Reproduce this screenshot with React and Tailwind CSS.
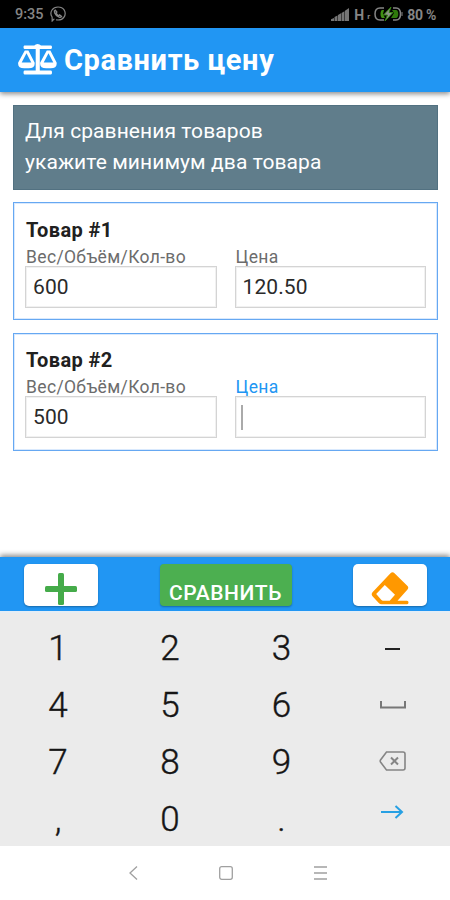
function ScaleIcon() {
  return (
    <svg className="mt-[-2px]" width="39" height="31" viewBox="0 0 39 31" fill="white" fillRule="evenodd">
      <path d="M6.500 1.500h9.800Q17.500 0 19.600 0T23 1.500h10q1 0 1 1.700T33 5H21.800v21.500H33q1 0 1 2T33 30.500H6.500q-1 0-1-2t1-2h11.200V5H6.500q-1 0-1-1.800t1-1.700z" />
      <path d="M6.800 6.500h3.600L16.600 18.500q.8 5.700-6 5.700H6.200Q-.6 24.200.2 18.500zM8.500 9.200 3.700 18.500h9.600z" />
      <path d="M28.800 6.500h3.600L38.600 18.500q.8 5.700-6 5.700H28.200Q21.400 24.200 22.200 18.500zM30.500 9.200 25.700 18.500h9.600z" />
    </svg>
  );
}

function EraserIcon() {
  return (
    <svg width="38" height="33" viewBox="0 0 38 33" fill="#ff9800" fillRule="evenodd">
      <path d="M19.500 1.200Q21.500-.6 23.500 1.200L36.500 14q1.500 1.700 0 3.400L26.500 28.700H36q1.500 0 1.500 1.800T36 32.200H10.500Q9 32.200 7.500 30.700L1.300 24Q0 22.200 1.500 20.200zM13.800 13 5.200 22l5 5.700Q11 28.700 12 28.700h6.700l5.300-5.900z" />
    </svg>
  );
}

function StatusBar() {
  return (
    <div className="flex h-7 shrink-0 items-center justify-between bg-black pl-[15px] pr-[14px] text-[#858585]">
      <div className="flex items-center gap-[6px]">
        <span className="pt-px text-[14.5px] font-medium leading-7">9:35</span>
        <svg width="16" height="16" viewBox="0 0 16 16" fill="none" stroke="#858585" strokeWidth="1.2" strokeLinecap="round">
          <path d="M4 13.2 2.2 15l-.1-4C.7 9 .7 6 2 4 3.500 1.800 5.500 1 8 1c2.800 0 4.900 1 6.100 2.900 1.300 2.100 1.200 5.200-.1 7.200-1.500 2.200-4.300 3.200-7.500 2.800" />
          <path d="M5.200 4.100c-1 .5-1 1.500-.6 2.500.9 2.100 2.400 3.700 4.600 4.600 1 .4 1.800.1 2.300-.8l-1.900-1.400-1 .8C7.400 9.200 6.500 8.300 6.100 7l.7-1z" strokeWidth="1.400" />
        </svg>
      </div>
      <div className="flex items-center">
        <svg width="19" height="13" viewBox="0 0 19 13" fill="#757575">
          <path d="M0 13v-1.700L3 10v3zM3.500 13V9l3-1.500V13zM7 13V7l3-1.800V13zM10.500 13V5l3-1.800V13zM14 13V2.800L18 0v13z" />
        </svg>
        <span className="ml-[4px] w-[10px] pt-px text-[14px] font-bold leading-7">H</span>
        <span className="ml-[3px] w-[6px] pt-[5px] text-[8px] font-bold leading-none">r</span>
        <svg className="ml-px" width="29" height="14" viewBox="0 0 29 14" fill="none">
          <path d="M10 1H6C2.800 1 1 3.500 1 7s1.800 6 5 6h4M19 1h3c3.200 0 4.500 2.500 4.500 6S25.200 13 22 13h-3" stroke="#858585" strokeWidth="1.500" />
          <path d="M10 3H8C6 4 6 10 8 11h3l-2-4z" fill="#3f8f12" />
          <path d="M18 3h4c3 0 3 8 0 8h-5l3-5z" fill="#2f7a0b" />
          <path d="M17 0 9.500 8h4L11 14l8-8.500h-4z" fill="#8b9488" stroke="#348312" strokeWidth="1" />
          <path d="M28 5v4" stroke="#858585" />
        </svg>
        <span className="ml-[4px] whitespace-nowrap pt-px text-[14px] font-bold leading-7 tracking-[-0.3px]">80 %</span>
      </div>
    </div>
  );
}

function Field({ label, value, active }) {
  return (
    <div>
      <div className={`h-[19px] pl-px text-[17.5px] leading-[20px] tracking-[0.35px] ${active ? "text-[#2196f3]" : "text-[#6c6c6c]"}`}>{label}</div>
      <div className="flex h-[42px] items-center border border-[#d4d4d4] bg-white pl-[7px] text-[21px] leading-none tracking-[0.1px] text-[#2a2a2a] shadow-[inset_0_0_0_1px_#f1f1f1]">
        {active ? <span className="ml-[-2px] h-[25px] w-[2px] bg-[#aaa]" /> : <span className="pt-px">{value}</span>}
      </div>
    </div>
  );
}

function ProductCard({ title, amount, price, active }) {
  return (
    <section className={`h-[118px] border border-[#66a8f2] bg-white px-[11px] shadow-[inset_0_0_0_1px_#d9e9fd] ${active ? "pt-[15px]" : "pt-4"}`}>
      <h2 className={`h-[28px] pl-px text-[20px] font-bold tracking-[0.4px] text-[#202020] ${active ? "leading-[22px]" : "leading-[23px]"}`}>{title}</h2>
      <div className="grid grid-cols-2 gap-[18px]">
        <Field label="Вес/Объём/Кол-во" value={amount} />
        <Field label="Цена" value={price} active={active} />
      </div>
    </section>
  );
}

function Key({ children }) {
  return <div className="flex h-[57px] items-center justify-center text-[35px] font-light leading-none text-[#151515] [-webkit-text-stroke:0.4px_#151515]">{children}</div>;
}

function Keypad() {
  return (
    <div className="h-[235px] shrink-0 border-t-2 border-[#e4edf5] bg-[#ebebeb] pl-[2px] pr-[2px] pt-[7px]">
      <div className="grid grid-cols-[112px_112px_111px_111px]">
        <Key>1</Key><Key>2</Key><Key>3</Key>
        <Key><span className="h-[2px] w-[15px] bg-[#222]" /></Key>
        <Key>4</Key><Key>5</Key><Key>6</Key>
        <Key>
          <svg className="mt-[-2px]" width="26" height="8" viewBox="0 0 26 8" fill="none" stroke="#777" strokeWidth="2"><path d="M1 0v6.500h24V0" /></svg>
        </Key>
        <Key>7</Key><Key>8</Key><Key>9</Key>
        <Key>
          <svg className="mt-[-3px]" width="27" height="20" viewBox="0 0 27 20" fill="none" stroke="#858585" strokeWidth="1.600">
            <path d="M7.500 1H24q2 0 2 2v14q0 2-2 2H7.500L1.500 11q-.6-1 0-2z" /><path d="m12 6.500 7 7m0-7-7 7" strokeWidth="2" />
          </svg>
        </Key>
        <Key>,</Key><Key>0</Key><Key>.</Key>
        <Key>
          <svg className="mt-[-16px]" width="23" height="14" viewBox="0 0 23 14" fill="none" stroke="#27a0e3" strokeWidth="2"><path d="M0 7h21M14.500 1l6.500 6-6.500 6" /></svg>
        </Key>
      </div>
    </div>
  );
}

export default function App() {
  return (
    <div className="flex h-[900px] w-[450px] flex-col overflow-hidden bg-white font-[Roboto,sans-serif]">
      <StatusBar />
      <header className="z-10 flex h-16 shrink-0 items-center bg-[#2196f3] pl-[18px] text-white shadow-[0_2px_5px_rgba(0,0,0,0.45)]">
        <ScaleIcon />
        <h1 className="ml-[7px] whitespace-nowrap text-[29px] font-bold leading-none tracking-[0.6px]">Сравнить цену</h1>
      </header>
      <main className="flex grow flex-col gap-[13px] px-[13px] pr-[12px] pt-[13px]">
        <div className="mb-[-1px] h-[85px] shrink-0 border border-[#527181] bg-[#607d8b] px-[11px] pt-[10px] text-[21px] leading-[31px] tracking-[0.08px] text-white">
          Для сравнения товаров<br />укажите минимум два товара
        </div>
        <ProductCard title="Товар #1" amount="600" price="120.50" />
        <ProductCard title="Товар #2" amount="500" active />
      </main>
      <footer className="flex h-[54px] shrink-0 items-start justify-between bg-[#2196f3] pl-[24px] pr-[23px] pt-[7px] shadow-[0_-2px_5px_rgba(0,0,0,0.45)]">
        <button className="flex h-[42px] w-[74px] items-center justify-center rounded-[5px] bg-white pt-[7px] shadow-[0_1px_2px_rgba(0,0,0,0.3)]">
          <svg width="32" height="32" viewBox="0 0 32 32" fill="#45ab4a"><rect x="13" width="6" height="32" rx="1.500" /><rect y="13" width="32" height="6" rx="1.500" /></svg>
        </button>
        <button className="flex h-[42px] w-[132px] items-center justify-center rounded-[4px] bg-[#4caf50] pt-[16px] text-[21px] font-medium leading-none tracking-[0.6px] text-white shadow-[0_1px_2px_rgba(0,0,0,0.3)]">СРАВНИТЬ</button>
        <button className="flex h-[42px] w-[74px] items-center justify-center rounded-[5px] bg-white pt-[6px] shadow-[0_1px_2px_rgba(0,0,0,0.3)]">
          <EraserIcon />
        </button>
      </footer>
      <Keypad />
      <nav className="flex h-[54px] shrink-0 items-center justify-center gap-[81px] bg-white pl-[5px] text-[#a0a0a0]">
        <svg width="9" height="14" viewBox="0 0 9 14" fill="none" stroke="currentColor" strokeWidth="1.300"><path d="M8 .5 1 7l7 6.500" /></svg>
        <svg width="14" height="14" viewBox="0 0 14 14" fill="none" stroke="currentColor" strokeWidth="1.300"><rect x=".7" y=".7" width="12.600" height="12.600" rx="2" /></svg>
        <svg width="13" height="14" viewBox="0 0 13 14" fill="none" stroke="currentColor" strokeWidth="1.300"><path d="M0 1h13M0 7h13M0 13h13" /></svg>
      </nav>
    </div>
  );
}
